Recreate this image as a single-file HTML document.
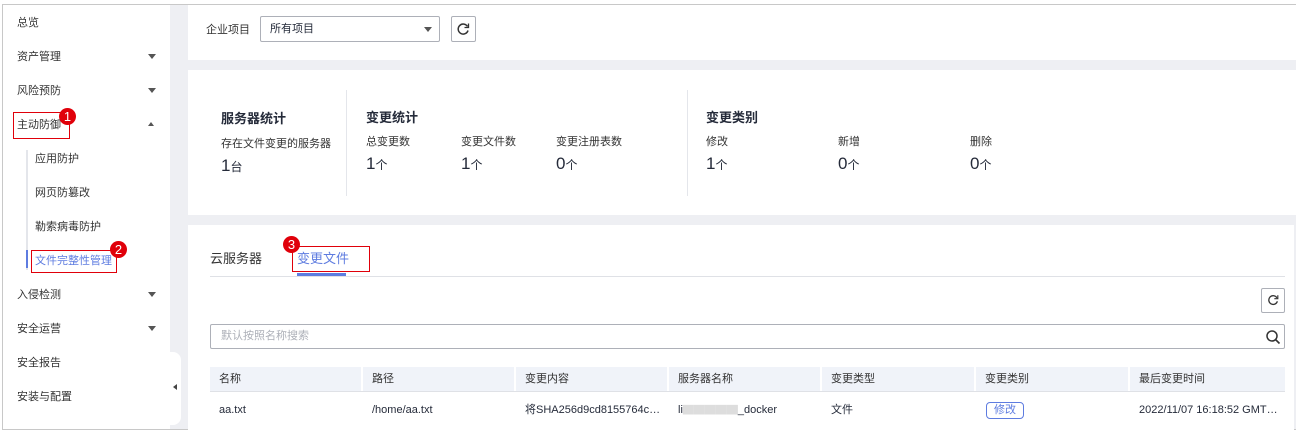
<!DOCTYPE html>
<html><head><meta charset="utf-8"><style>
*{box-sizing:border-box;margin:0;padding:0}
body{width:1298px;height:431px;overflow:hidden;background:#fff;font-family:"Liberation Sans","Noto Sans CJK SC",sans-serif;font-size:12px;color:#252b3a;position:relative}
.a{position:absolute}
.frame{left:2px;top:4px;width:1294px;height:426px;border:1px solid #c8c8c8;border-right:none;background:#eeeff3}
.side{left:3px;top:5px;width:167px;height:424px;background:#fff}
.nav{left:17px;font-size:11px;color:#333}
.arr{left:148px;width:0;height:0;border-left:4px solid transparent;border-right:4px solid transparent;border-top:5px solid #555}
.card{background:#fff}
.red{border:1px solid #e0000a}
.badge{width:17px;height:17px;border-radius:50%;background:#e0000a;color:#fff;font-size:13px;text-align:center;line-height:17px}
.lbl{font-size:11px;color:#333}
.num{font-size:17px;color:#252b3a}
.num small{font-size:12px}
.th{top:367px;height:24px;background:#f0f3f9;line-height:24px;padding-left:9px;font-size:11px;color:#333;border-right:2px solid #fff}
.td{top:398px;font-size:11px;padding-left:9px;line-height:24px;color:#252b3a}
</style></head><body>
<div class="a frame"></div>
<div class="a side"></div>
<div class="a" style="left:170px;top:352px;width:11px;height:73px;background:#fff;border-radius:0 8px 8px 0"></div>
<div class="a" style="left:173px;top:384px;width:0;height:0;border-top:3px solid transparent;border-bottom:3px solid transparent;border-right:4px solid #444"></div>
<div class="a nav" style="top:14px">总览</div>
<div class="a nav" style="top:48px">资产管理</div><div class="a arr" style="top:54px"></div>
<div class="a nav" style="top:82px">风险预防</div><div class="a arr" style="top:88px"></div>
<div class="a nav" style="top:116px">主动防御</div>
<div class="a" style="left:148px;top:122px;width:0;height:0;border-left:3px solid transparent;border-right:3px solid transparent;border-bottom:4px solid #555"></div>
<div class="a red" style="left:13px;top:112px;width:57px;height:27px"></div>
<div class="a badge" style="left:59px;top:108px">1</div>
<div class="a" style="left:26px;top:150px;width:2px;height:120px;background:#e4e6eb"></div>
<div class="a" style="left:26px;top:250px;width:2px;height:18px;background:#5e7ce0"></div>
<div class="a nav" style="left:35px;top:150px">应用防护</div>
<div class="a nav" style="left:35px;top:184px">网页防篡改</div>
<div class="a nav" style="left:35px;top:218px">勒索病毒防护</div>
<div class="a nav" style="left:35px;top:252px;color:#5e7ce0">文件完整性管理</div>
<div class="a red" style="left:31px;top:250px;width:86px;height:23px"></div>
<div class="a badge" style="left:110px;top:241px">2</div>
<div class="a nav" style="top:286px">入侵检测</div><div class="a arr" style="top:292px"></div>
<div class="a nav" style="top:320px">安全运营</div><div class="a arr" style="top:326px"></div>
<div class="a nav" style="top:354px">安全报告</div>
<div class="a nav" style="top:388px">安装与配置</div>

<div class="a card" style="left:188px;top:5px;width:1108px;height:55px"></div>
<div class="a lbl" style="left:206px;top:21px">企业项目</div>
<div class="a" style="left:260px;top:16px;width:180px;height:26px;border:1px solid #adb0b8;border-radius:2px;padding-left:9px;line-height:24px;font-size:11px">所有项目</div>
<div class="a" style="left:424px;top:27px;width:0;height:0;border-left:4px solid transparent;border-right:4px solid transparent;border-top:5px solid #555"></div>
<div class="a" style="left:451px;top:16px;width:25px;height:26px;border:1px solid #adb0b8;border-radius:2px"></div>
<svg class="a" style="left:455px;top:21px" width="16" height="16" viewBox="0 0 16 16"><path d="M12.5 5.5A5 5 0 1 0 13 9.5" fill="none" stroke="#333" stroke-width="1.5"/><path d="M13.5 2.5v4h-4" fill="none" stroke="#333" stroke-width="1.3"/></svg>

<div class="a card" style="left:188px;top:70px;width:1108px;height:145px"></div>
<div class="a" style="left:221px;top:108px;font-size:13px;font-weight:bold">服务器统计</div>
<div class="a lbl" style="left:221px;top:135px">存在文件变更的服务器</div>
<div class="a num" style="left:221px;top:156px">1<small>台</small></div>
<div class="a" style="left:346px;top:90px;width:1px;height:106px;background:#e4e6eb"></div>
<div class="a" style="left:366px;top:107px;font-size:13px;font-weight:bold">变更统计</div>
<div class="a lbl" style="left:366px;top:133px">总变更数</div>
<div class="a lbl" style="left:461px;top:133px">变更文件数</div>
<div class="a lbl" style="left:556px;top:133px">变更注册表数</div>
<div class="a num" style="left:366px;top:154px">1<small>个</small></div>
<div class="a num" style="left:461px;top:154px">1<small>个</small></div>
<div class="a num" style="left:556px;top:154px">0<small>个</small></div>
<div class="a" style="left:687px;top:90px;width:1px;height:106px;background:#e4e6eb"></div>
<div class="a" style="left:706px;top:107px;font-size:13px;font-weight:bold">变更类别</div>
<div class="a lbl" style="left:706px;top:133px">修改</div>
<div class="a lbl" style="left:838px;top:133px">新增</div>
<div class="a lbl" style="left:970px;top:133px">删除</div>
<div class="a num" style="left:706px;top:154px">1<small>个</small></div>
<div class="a num" style="left:838px;top:154px">0<small>个</small></div>
<div class="a num" style="left:970px;top:154px">0<small>个</small></div>

<div class="a card" style="left:188px;top:225px;width:1106px;height:205px"></div>
<div class="a" style="left:210px;top:248px;font-size:13px;color:#333">云服务器</div>
<div class="a" style="left:297px;top:248px;font-size:13px;color:#5e7ce0">变更文件</div>
<div class="a" style="left:210px;top:276px;width:1075px;height:1px;background:#dfe1e6"></div>
<div class="a" style="left:297px;top:273px;width:49px;height:3px;background:#5e7ce0"></div>
<div class="a red" style="left:292px;top:246px;width:78px;height:26px"></div>
<div class="a badge" style="left:283px;top:236px">3</div>
<div class="a" style="left:1261px;top:288px;width:24px;height:25px;border:1px solid #adb0b8;border-radius:2px"></div>
<svg class="a" style="left:1266px;top:293px" width="14" height="14" viewBox="0 0 16 16"><path d="M12.5 5.5A5 5 0 1 0 13 9.5" fill="none" stroke="#333" stroke-width="1.5"/><path d="M13.5 2.5v4h-4" fill="none" stroke="#333" stroke-width="1.3"/></svg>
<div class="a" style="left:210px;top:324px;width:1075px;height:25px;border:1px solid #adb0b8;border-radius:2px;padding-left:10px;line-height:23px;font-size:11px;color:#adb0b8">默认按照名称搜索</div>
<svg class="a" style="left:1265px;top:329px" width="16" height="16" viewBox="0 0 16 16"><circle cx="7" cy="7" r="5" fill="none" stroke="#333" stroke-width="1.5"/><path d="M10.5 10.5l4 4" stroke="#333" stroke-width="1.6"/></svg>

<div class="a th" style="left:210px;width:153px">名称</div>
<div class="a th" style="left:363px;width:153px">路径</div>
<div class="a th" style="left:516px;width:153px">变更内容</div>
<div class="a th" style="left:669px;width:153px">服务器名称</div>
<div class="a th" style="left:822px;width:154px">变更类型</div>
<div class="a th" style="left:976px;width:154px">变更类别</div>
<div class="a th" style="left:1130px;width:155px;border-right:none">最后变更时间</div>
<div class="a" style="left:210px;top:391px;width:1075px;height:1px;background:#dfe1e6"></div>
<div class="a td" style="left:210px">aa.txt</div>
<div class="a td" style="left:363px">/home/aa.txt</div>
<div class="a td" style="left:516px">将SHA256d9cd8155764c…</div>
<div class="a td" style="left:669px">li<span style="color:#ddd">▇▇▇▇▇</span>_docker</div>
<div class="a td" style="left:822px">文件</div>
<div class="a" style="left:986px;top:402px;width:38px;height:17px;border:1px solid #5e7ce0;border-radius:4px;text-align:center;line-height:15px;font-size:11px;color:#5e7ce0">修改</div>
<div class="a td" style="left:1130px">2022/11/07 16:18:52 GMT…</div>
</body></html>
